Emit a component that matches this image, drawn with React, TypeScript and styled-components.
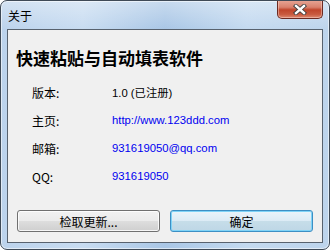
import React from "react";
import styled, { createGlobalStyle } from "styled-components";

const Global = createGlobalStyle`
  html, body { margin: 0; padding: 0; background: #ffffff; }
  body { width: 330px; height: 250px; overflow: hidden; font-family: "Noto Sans CJK SC", "DejaVu Sans", sans-serif; }
  * { box-sizing: border-box; }
`;

const Window = styled.div`
  width: 330px;
  height: 250px;
  border: 1px solid #3f4a57;
  border-radius: 7px;
  background:
    linear-gradient(180deg, rgba(255,255,255,0.35) 0px, rgba(255,255,255,0) 28px),
    linear-gradient(90deg, #bcd3ec 0%, #c8dcf1 25%, #aac7e6 50%, #c4daf0 75%, #bdd4ec 100%);
  box-shadow: inset 0 0 0 1px rgba(255,255,255,0.55);
  display: flex;
  flex-direction: column;
  padding: 0 6px 6px 6px;
  overflow: hidden;
`;

const TitleBar = styled.div`
  height: 28px;
  display: flex;
  align-items: flex-start;
  flex-shrink: 0;
`;

const Title = styled.span`
  align-self: center;
  margin-left: 1px;
  margin-top: 1px;
  font-size: 12px;
  color: #000;
  line-height: 14px;
`;

const CloseButton = styled.div`
  margin-left: auto;
  width: 46px;
  height: 19px;
  margin-top: -1px;
  border: 1px solid #6b2a22;
  border-top: none;
  border-radius: 0 0 5px 5px;
  background: linear-gradient(180deg, #e8a797 0%, #d9816d 40%, #c0452b 55%, #c95a3f 80%, #dc8a72 100%);
  box-shadow: inset 0 0 0 1px rgba(255,220,210,0.45);
  display: flex;
  align-items: center;
  justify-content: center;
`;

const Client = styled.div`
  flex: 1;
  border: 1px solid #58626e;
  background: #f0f0f0;
  display: flex;
  flex-direction: column;
`;

const Heading = styled.div`
  margin: 18px 0 0 8px;
  font-size: 17px;
  font-weight: bold;
  line-height: 20px;
  color: #000;
`;

const InfoList = styled.div`
  margin: 10px 0 0 24px;
  display: grid;
  grid-template-columns: 80px 1fr;
  grid-auto-rows: 28px;
  align-items: center;
`;

const Label = styled.span`
  font-size: 12px;
  color: #000;
`;

const Value = styled.span<{ $link?: boolean }>`
  font-family: "Liberation Sans", "Noto Sans CJK SC", sans-serif;
  font-size: 11.3px;
  color: ${(p) => (p.$link ? "#0000f0" : "#000")};
`;

const ButtonRow = styled.div`
  margin-top: auto;
  display: flex;
  gap: 10px;
  padding: 0 9px 10px 9px;
`;

const Button = styled.div<{ $default?: boolean }>`
  width: 143px;
  height: 22px;
  border-radius: 3px;
  border: 1px solid ${(p) => (p.$default ? "#3c8fc4" : "#707070")};
  background: ${(p) =>
    p.$default
      ? "linear-gradient(180deg, #eaf4fa 0%, #dcebf5 48%, #c6dde9 52%, #bed7e6 100%)"
      : "linear-gradient(180deg, #f2f2f2 0%, #ebebeb 48%, #dddddd 52%, #cfcfcf 100%)"};
  box-shadow: ${(p) =>
    p.$default
      ? "inset 0 0 0 1px #7fd3f7"
      : "inset 0 0 0 1px rgba(255,255,255,0.8)"};
  display: flex;
  align-items: center;
  justify-content: center;
  font-size: 12px;
  color: #000;
`;

const CloseIcon = () => (
  <svg width="14" height="11" viewBox="0 0 14 11">
    <path d="M3 2 L11 9 M11 2 L3 9" stroke="#3d3d3d" strokeWidth="4.2" strokeLinecap="square" />
    <path d="M3 2 L11 9 M11 2 L3 9" stroke="#ffffff" strokeWidth="2.4" strokeLinecap="square" />
  </svg>
);

export default function App() {
  return (
    <>
      <Global />
      <Window>
        <TitleBar>
          <Title>关于</Title>
          <CloseButton>
            <CloseIcon />
          </CloseButton>
        </TitleBar>
        <Client>
          <Heading>快速粘贴与自动填表软件</Heading>
          <InfoList>
            <Label>版本:</Label>
            <Value>1.0 (已注册)</Value>
            <Label>主页:</Label>
            <Value $link>http://www.123ddd.com</Value>
            <Label>邮箱:</Label>
            <Value $link>931619050@qq.com</Value>
            <Label>QQ:</Label>
            <Value $link>931619050</Value>
          </InfoList>
          <ButtonRow>
            <Button>检取更新...</Button>
            <Button $default>确定</Button>
          </ButtonRow>
        </Client>
      </Window>
    </>
  );
}
